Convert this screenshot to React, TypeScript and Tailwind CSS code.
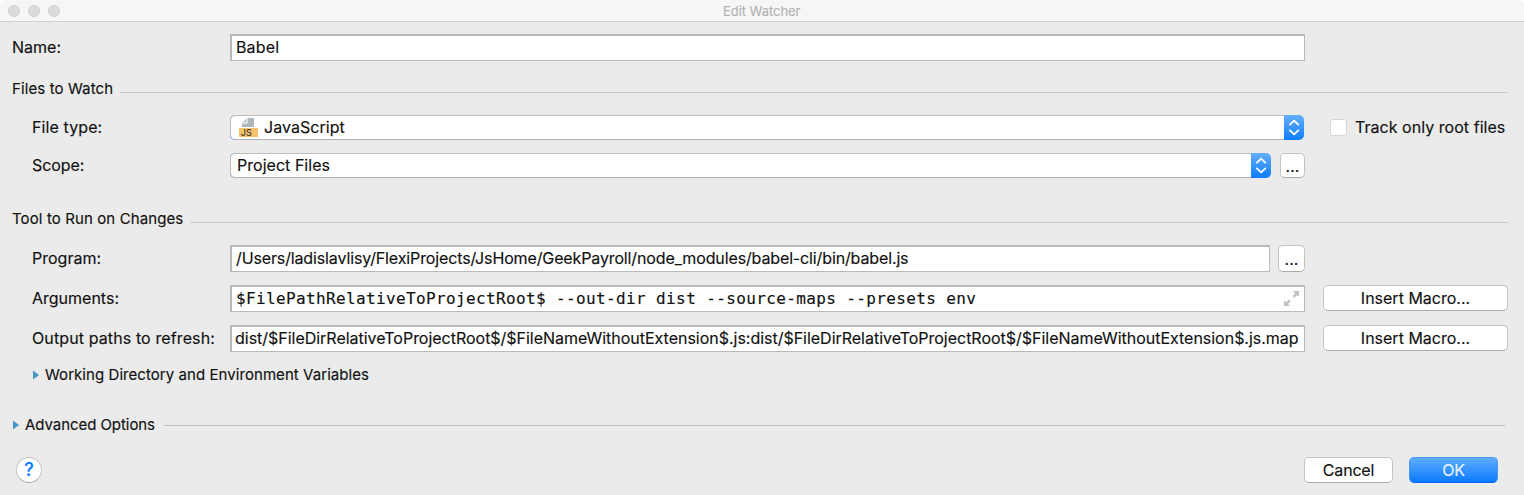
import type { ReactNode } from "react";

function Label({ children, className = "" }: { children: ReactNode; className?: string }) {
  return <div className={`shrink-0 pb-[2px] whitespace-nowrap ${className}`}>{children}</div>;
}

function Field({ children, className }: { children: ReactNode; className: string }) {
  return (
    <div
      className={`flex h-[27px] shrink-0 items-center whitespace-nowrap border-t-2 border-r border-b border-l-2 border-[#b9b9b9] bg-white ${className}`}
    >
      {children}
    </div>
  );
}

function Button({ children, className }: { children: ReactNode; className: string }) {
  return (
    <button
      className={`flex shrink-0 items-center justify-center whitespace-nowrap rounded-[5px] border border-[#c4c4c4] border-b-[#a9a9a9] bg-white ${className}`}
    >
      {children}
    </button>
  );
}

function Select({ children, className }: { children: ReactNode; className: string }) {
  return (
    <div
      className={`flex h-[25px] shrink-0 items-stretch overflow-hidden rounded-[5px] bg-[linear-gradient(to_bottom,#64affc,#0f7dfd)] ${className}`}
    >
      <div className="flex flex-1 items-center rounded-l-[5px] border border-r-0 border-[#bcbcbc] border-b-[#b0b0b0] bg-white">
        {children}
      </div>
      <svg className="h-[25px] w-[20px]" viewBox="0 0 20 25" fill="none" stroke="white" strokeWidth="1.8" strokeLinecap="round" strokeLinejoin="round">
        <path d="M5.9 9.6 10.1 5.6 14.3 9.6M5.9 15.4 10.1 19.4 14.3 15.4" />
      </svg>
    </div>
  );
}

function Heading({ children }: { children: ReactNode }) {
  return (
    <div className="flex h-[22px] items-center pr-4 pl-[12px] text-[15px]">
      <span className="shrink-0 tracking-[0.11px]">{children}</span>
      <div className="mt-[7px] ml-[7px] h-px flex-1 bg-[#c9c9c9]" />
    </div>
  );
}

function Triangle() {
  return (
    <svg className="h-[10px] w-[6px] shrink-0" viewBox="0 0 6 10" fill="#4795c4">
      <path d="M0 0.5 6 5 0 9.5Z" />
    </svg>
  );
}

function JsFileIcon() {
  return (
    <svg className="ml-2 h-[20px] w-[19px]" viewBox="0 0 19 20">
      <path d="M8.5 0H15V9H3V5.5H8.5Z" fill="#aeb8be" />
      <path d="M7.5 0.5V4.5H3.5Z" fill="#b9c2c7" />
      <path d="M0 10H19V19H0Z" fill="#f6c36c" />
      <text x="1.8" y="18" fontSize="9" fontFamily="Inter, sans-serif" fontWeight="500" fill="#3e3a30">JS</text>
    </svg>
  );
}

export default function App() {
  return (
    <div className="h-[495px] w-[1524px] overflow-hidden bg-white font-['Inter',sans-serif] text-[16px] leading-[20px] text-[#111111] [-webkit-text-stroke:0.15px]">
      <div className="flex h-full flex-col rounded-t-[6px] bg-[#ebebeb]">
        <div className="flex h-[22px] shrink-0 items-center rounded-t-[6px] border-b border-[#cfcfcf] bg-[#f6f6f6] pl-2">
          <div className="flex w-[600px] gap-2">
            <i className="size-3 rounded-full border border-[#cecece] bg-[#dcdcdc]" />
            <i className="size-3 rounded-full border border-[#cecece] bg-[#dcdcdc]" />
            <i className="size-3 rounded-full border border-[#cecece] bg-[#dcdcdc]" />
          </div>
          <span className="ml-[115px] text-[13px] tracking-[-0.05px] text-[#b3b3b3]">Edit Watcher</span>
        </div>

        <div className="mt-3 flex h-[27px] items-center pl-[12px]">
          <Label className="w-[218px]">Name:</Label>
          <Field className="w-[1075px] pl-[4px]"><span className="pb-[2px] tracking-[0.15px]">Babel</span></Field>
        </div>

        <div className="mt-[17px]"><Heading>Files to Watch</Heading></div>

        <div className="mt-[15px] flex h-[25px] items-center pl-[32px]">
          <Label className="w-[198px] tracking-[0.1px]">File type:</Label>
          <Select className="w-[1074px]">
            <JsFileIcon />
            <span className="ml-[6px] pb-[2px] tracking-[0.05px]">JavaScript</span>
          </Select>
          <div className="ml-[26px] size-[17px] rounded-[3px] border border-[#d6d6d6] bg-white" />
          <span className="ml-[8px] pb-[2px] whitespace-nowrap tracking-[0.04px]">Track only root files</span>
        </div>

        <div className="mt-[13px] flex h-[25px] items-center pl-[32px]">
          <Label className="w-[198px] tracking-[-0.08px]">Scope:</Label>
          <Select className="w-[1041px]"><span className="ml-[6px] pb-[2px] tracking-[0.03px]">Project Files</span></Select>
          <Button className="ml-[9px] h-[25px] w-[25px]"><span>...</span></Button>
        </div>

        <div className="mt-[30px]"><Heading>Tool to Run on Changes</Heading></div>

        <div className="mt-[15px] flex h-[27px] items-center pl-[32px]">
          <Label className="w-[198px]">Program:</Label>
          <Field className="w-[1040px] pl-[4px]">
            <span className="pb-[2px] tracking-[-0.13px]">/Users/ladislavlisy/FlexiProjects/JsHome/GeekPayroll/node_modules/babel-cli/bin/babel.js</span>
          </Field>
          <Button className="ml-2 h-[27px] w-[27px]"><span>...</span></Button>
        </div>

        <div className="mt-[13px] flex h-[27px] items-center pl-[32px]">
          <Label className="w-[198px]">Arguments:</Label>
          <Field className="w-[1075px] justify-between pl-[4px]">
            <span className="font-['DejaVu_Sans_Mono',monospace] tracking-[0.37px]">
              $FilePathRelativeToProjectRoot$ --out-dir dist --source-maps --presets env
            </span>
            <svg className="mr-[5px] mb-[2px] size-[15px]" viewBox="0 0 15 15" fill="#bcc3c8">
              <path d="M9 0H15V6L13 4 10.3 6.7 8.6 5 11.2 2.2Z" />
              <path d="M0 9V15H6L4 13 6.7 10.3 5 8.6 2.2 11.2Z" />
            </svg>
          </Field>
          <Button className="ml-[18px] h-[26px] w-[185px] self-start">Insert Macro...</Button>
        </div>

        <div className="mt-[13px] flex h-[27px] items-center pl-[32px]">
          <Label className="w-[198px] tracking-[0.11px]">Output paths to refresh:</Label>
          <Field className="w-[1075px] pl-[3px]">
            <span className="pb-[2px] tracking-[-0.02px]">
              dist/$FileDirRelativeToProjectRoot$/$FileNameWithoutExtension$.js:dist/$FileDirRelativeToProjectRoot$/$FileNameWithoutExtension$.js.map
            </span>
          </Field>
          <Button className="ml-[18px] h-[26px] w-[185px] self-start">Insert Macro...</Button>
        </div>

        <div className="mt-[12px] flex h-[22px] items-center pl-[33px] text-[15px]">
          <Triangle />
          <span className="ml-[6px] tracking-[0.06px]">Working Directory and Environment Variables</span>
        </div>

        <div className="mt-[28px] flex h-[22px] items-center pr-[19px] pl-[13px] text-[15px]">
          <Triangle />
          <span className="ml-[6px] tracking-[-0.06px]">Advanced Options</span>
          <div className="ml-[9px] h-px flex-1 bg-[#bdbdbd]" />
        </div>

        <div className="mt-[21px] flex h-[26px] items-center pr-[26px] pl-[16px]">
          <button className="flex size-[26px] items-center justify-center rounded-full border border-[#c6c6c6] border-b-[#adadad] bg-white text-[18px] font-medium text-[#0a7cff]">?</button>
          <Button className="ml-auto h-[26px] w-[89px]"><span className="tracking-[-0.2px]">Cancel</span></Button>
          <button className="ml-4 h-[26px] w-[89px] rounded-[5px] border border-[#4798f5] border-b-[#0867f0] bg-[linear-gradient(to_bottom,#5fadfd,#0a7aff)] leading-[24px] tracking-[-0.3px] text-[#e9f2ff]">OK</button>
        </div>
      </div>
    </div>
  );
}
